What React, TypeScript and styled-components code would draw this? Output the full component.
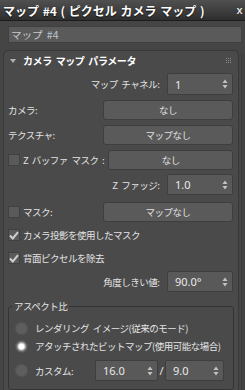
import React from "react";
import styled, { createGlobalStyle } from "styled-components";

const Global = createGlobalStyle`
  html, body { margin: 0; padding: 0; background: #454545; }
  body { font-family: "Noto Sans CJK JP", "Noto Sans", sans-serif; }
  * { box-sizing: border-box; }
`;

const Window = styled.div`
  width: 245px;
  height: 390px;
  overflow: hidden;
  background: #454545;
  display: flex;
  flex-direction: column;
  font-family: "Noto Sans CJK JP", "Noto Sans", sans-serif;
  font-size: 9.5px;
  letter-spacing: -0.5px;
  word-spacing: 2px;
  color: #e2e2e2;
`;

const TitleBar = styled.div`
  height: 21px;
  flex: none;
  display: flex;
  align-items: center;
  justify-content: space-between;
  padding: 0 3px;
  background: linear-gradient(#505050, #2e2e2e);
  border-bottom: 1px solid #1c1c1c;
`;

const TitleText = styled.span`
  font-weight: 700;
  font-size: 12px;
  color: #ffffff;
  letter-spacing: 0px;
  word-spacing: 1px;
  white-space: pre;
  text-shadow: 0 1px 1px #111;
`;

const Close = styled.span`
  font-family: "Liberation Sans", sans-serif;
  font-weight: 700;
  font-size: 11px;
  color: #e8e8e8;
  text-shadow: 0 0 1px #000;
`;

const Body = styled.div`
  flex: 1;
  display: flex;
  flex-direction: column;
  padding-top: 5px;
  min-height: 0;
`;

const NameField = styled.div`
  height: 17px;
  margin: 0 3px 0 8px;
  background: #5a5a5a;
  border: 1px solid #404040;
  display: flex;
  align-items: center;
  padding-left: 2px;
  color: #c9c9c9;
  font-size: 10.5px;
  letter-spacing: 0;
  white-space: pre;
`;

const Hash = styled.span`
  color: #b8c4d4;
`;

const Content = styled.div`
  flex: 1;
  display: flex;
  margin-top: 7px;
  min-height: 0;
`;

const Panel = styled.div`
  margin-left: 3px;
  width: 236px;
  background: #4a4a4a;
  border: 1px solid #383838;
  border-bottom: none;
  border-radius: 5px 5px 0 0;
  display: flex;
  flex-direction: column;
`;

const Strip = styled.div`
  flex: 1;
  margin-top: 3px;
  border-left: 1px solid #3b3b3b;
  margin-left: 2px;
  background: #434343;
`;

const Header = styled.div`
  height: 19px;
  display: flex;
  align-items: center;
  padding: 0 6px 0 6px;
  gap: 7px;
`;

const HeaderTitle = styled.span`
  flex: 1;
  font-weight: 700;
  font-size: 10px;
  letter-spacing: -0.4px;
  word-spacing: 2px;
  color: #ffffff;
  white-space: pre;
`;

const Row = styled.div<{ $mt: number; $h: number; $end?: boolean }>`
  margin-top: ${(p) => p.$mt}px;
  height: ${(p) => p.$h}px;
  display: flex;
  align-items: center;
  justify-content: ${(p) => (p.$end ? "flex-end" : "space-between")};
  padding: 0 5px 0 4px;
  gap: 4px;
`;

const Label = styled.span`
  white-space: pre;
  color: #e4e4e4;
  line-height: 14px;
`;

const CheckLabel = styled.label`
  display: flex;
  align-items: center;
  gap: 3px;
  white-space: pre;
  color: #e4e4e4;
  line-height: 14px;
`;

const Box = styled.span`
  width: 12px;
  height: 12px;
  flex: none;
  background: #5a5a5a;
  border: 1px solid #404040;
  display: flex;
  align-items: center;
  justify-content: center;
`;

const Button = styled.div`
  width: 130px;
  height: 20px;
  background: #5a5a5a;
  border: 1px solid #3e3e3e;
  border-radius: 3px;
  display: flex;
  align-items: center;
  justify-content: center;
  color: #e0e0e0;
`;

const SpinBox = styled.div<{ $w: number; $h: number }>`
  width: ${(p) => p.$w}px;
  height: ${(p) => p.$h}px;
  flex: none;
  background: #595959;
  border: 1px solid #3e3e3e;
  border-radius: 2px;
  display: flex;
  align-items: center;
  justify-content: space-between;
  padding: 0 4px 0 7px;
`;

const SpinValue = styled.span`
  font-family: "Noto Sans", sans-serif;
  font-size: 11px;
  letter-spacing: 0;
  color: #eaeaea;
`;

const Group = styled.fieldset`
  margin: 7px 4px 0 4px;
  padding: 0 0 8px 0;
  border: 1px solid #343434;
  border-radius: 3px;
  min-width: 0;
`;

const Legend = styled.legend`
  margin-left: 3px;
  padding: 0 2px;
  line-height: 14px;
  color: #e4e4e4;
  white-space: pre;
`;

const RadioRow = styled.div<{ $mt: number; $h: number }>`
  margin-top: ${(p) => p.$mt}px;
  height: ${(p) => p.$h}px;
  display: flex;
  align-items: center;
  padding-left: 6px;
`;

const Radio = styled.span<{ $on?: boolean }>`
  width: 13px;
  height: 13px;
  flex: none;
  border-radius: 50%;
  margin-right: 7px;
  background: ${(p) =>
    p.$on
      ? "radial-gradient(circle, #ffffff 0 2.5px, #cfcfcf 3.2px, #6a6a6a 5px, #5a5a5a 6.5px)"
      : "radial-gradient(circle, #5e5e5e 0 4px, #585858 6.5px)"};
  box-shadow: inset 0 0 0 0.5px #505050;
`;

const CustomLabel = styled.span`
  width: 60px;
  white-space: pre;
  color: #e4e4e4;
`;

const Slash = styled.span`
  width: 7px;
  text-align: center;
  font-family: "Noto Sans", sans-serif;
  font-size: 11px;
  letter-spacing: 0;
  color: #e4e4e4;
`;

const Arrows = () => (
  <svg width="6" height="10" viewBox="0 0 6 10">
    <path d="M3 0.5 L5.5 4 H0.5 Z" fill="#c2c2c2" />
    <path d="M3 9.5 L5.5 6 H0.5 Z" fill="#c2c2c2" />
  </svg>
);

const Spinner = ({ value, w = 66, h = 22 }: { value: string; w?: number; h?: number }) => (
  <SpinBox $w={w} $h={h}>
    <SpinValue>{value}</SpinValue>
    <Arrows />
  </SpinBox>
);

const Check = () => (
  <svg width="10" height="9" viewBox="0 0 10 9">
    <path d="M1 4.5 L3.8 7.5 L9 1.2" stroke="#cfcfcf" strokeWidth="2" fill="none" />
  </svg>
);

const Grip = () => (
  <svg width="6" height="6" viewBox="0 0 6 6">
    {[0, 2, 4].map((y) =>
      [0, 2, 4].map((x) => <rect key={`${x}-${y}`} x={x} y={y} width="1" height="1" fill="#8a8a8a" />)
    )}
  </svg>
);

const Triangle = () => (
  <svg width="6" height="4" viewBox="0 0 6 4">
    <path d="M0 0 H6 L3 4 Z" fill="#b0b0b0" />
  </svg>
);

export default function App() {
  return (
    <Window>
      <Global />
      <TitleBar>
        <TitleText>マップ #4 ( ピクセル カメラ マップ )</TitleText>
        <Close>x</Close>
      </TitleBar>
      <Body>
        <NameField>
          マップ <Hash>#4</Hash>
        </NameField>
        <Content>
          <Panel>
            <Header>
              <Triangle />
              <HeaderTitle>カメラ マップ パラメータ</HeaderTitle>
              <Grip />
            </Header>
            <Row $mt={3} $h={22} $end>
              <Label>マップ チャネル: </Label>
              <Spinner value="1" />
            </Row>
            <Row $mt={5} $h={20}>
              <Label>カメラ:</Label>
              <Button>なし</Button>
            </Row>
            <Row $mt={5} $h={20}>
              <Label>テクスチャ:</Label>
              <Button>マップなし</Button>
            </Row>
            <Row $mt={5} $h={20}>
              <CheckLabel>
                <Box />Z バッファ マスク :
              </CheckLabel>
              <Button>なし</Button>
            </Row>
            <Row $mt={4} $h={21} $end>
              <Label>Z ファッジ: </Label>
              <Spinner value="1.0" h={21} />
            </Row>
            <Row $mt={7} $h={20}>
              <CheckLabel>
                <Box />マスク:
              </CheckLabel>
              <Button>マップなし</Button>
            </Row>
            <Row $mt={5} $h={16}>
              <CheckLabel>
                <Box>
                  <Check />
                </Box>
                カメラ投影を使用したマスク
              </CheckLabel>
            </Row>
            <Row $mt={7} $h={16}>
              <CheckLabel>
                <Box>
                  <Check />
                </Box>
                背面ピクセルを除去
              </CheckLabel>
            </Row>
            <Row $mt={5} $h={21} $end>
              <Label>角度しきい値: </Label>
              <Spinner value="90.0°" h={21} />
            </Row>
            <Group>
              <Legend>アスペクト比</Legend>
              <RadioRow $mt={7} $h={16}>
                <Radio />
                <Label>レンダリング イメージ(従来のモード)</Label>
              </RadioRow>
              <RadioRow $mt={2} $h={16}>
                <Radio $on />
                <Label>アタッチされたビットマップ(使用可能な場合)</Label>
              </RadioRow>
              <RadioRow $mt={6} $h={21}>
                <Radio />
                <CustomLabel>カスタム:</CustomLabel>
                <Spinner value="16.0" w={63} h={21} />
                <Slash>/</Slash>
                <Spinner value="9.0" w={59} h={21} />
              </RadioRow>
            </Group>
          </Panel>
          <Strip />
        </Content>
      </Body>
    </Window>
  );
}
